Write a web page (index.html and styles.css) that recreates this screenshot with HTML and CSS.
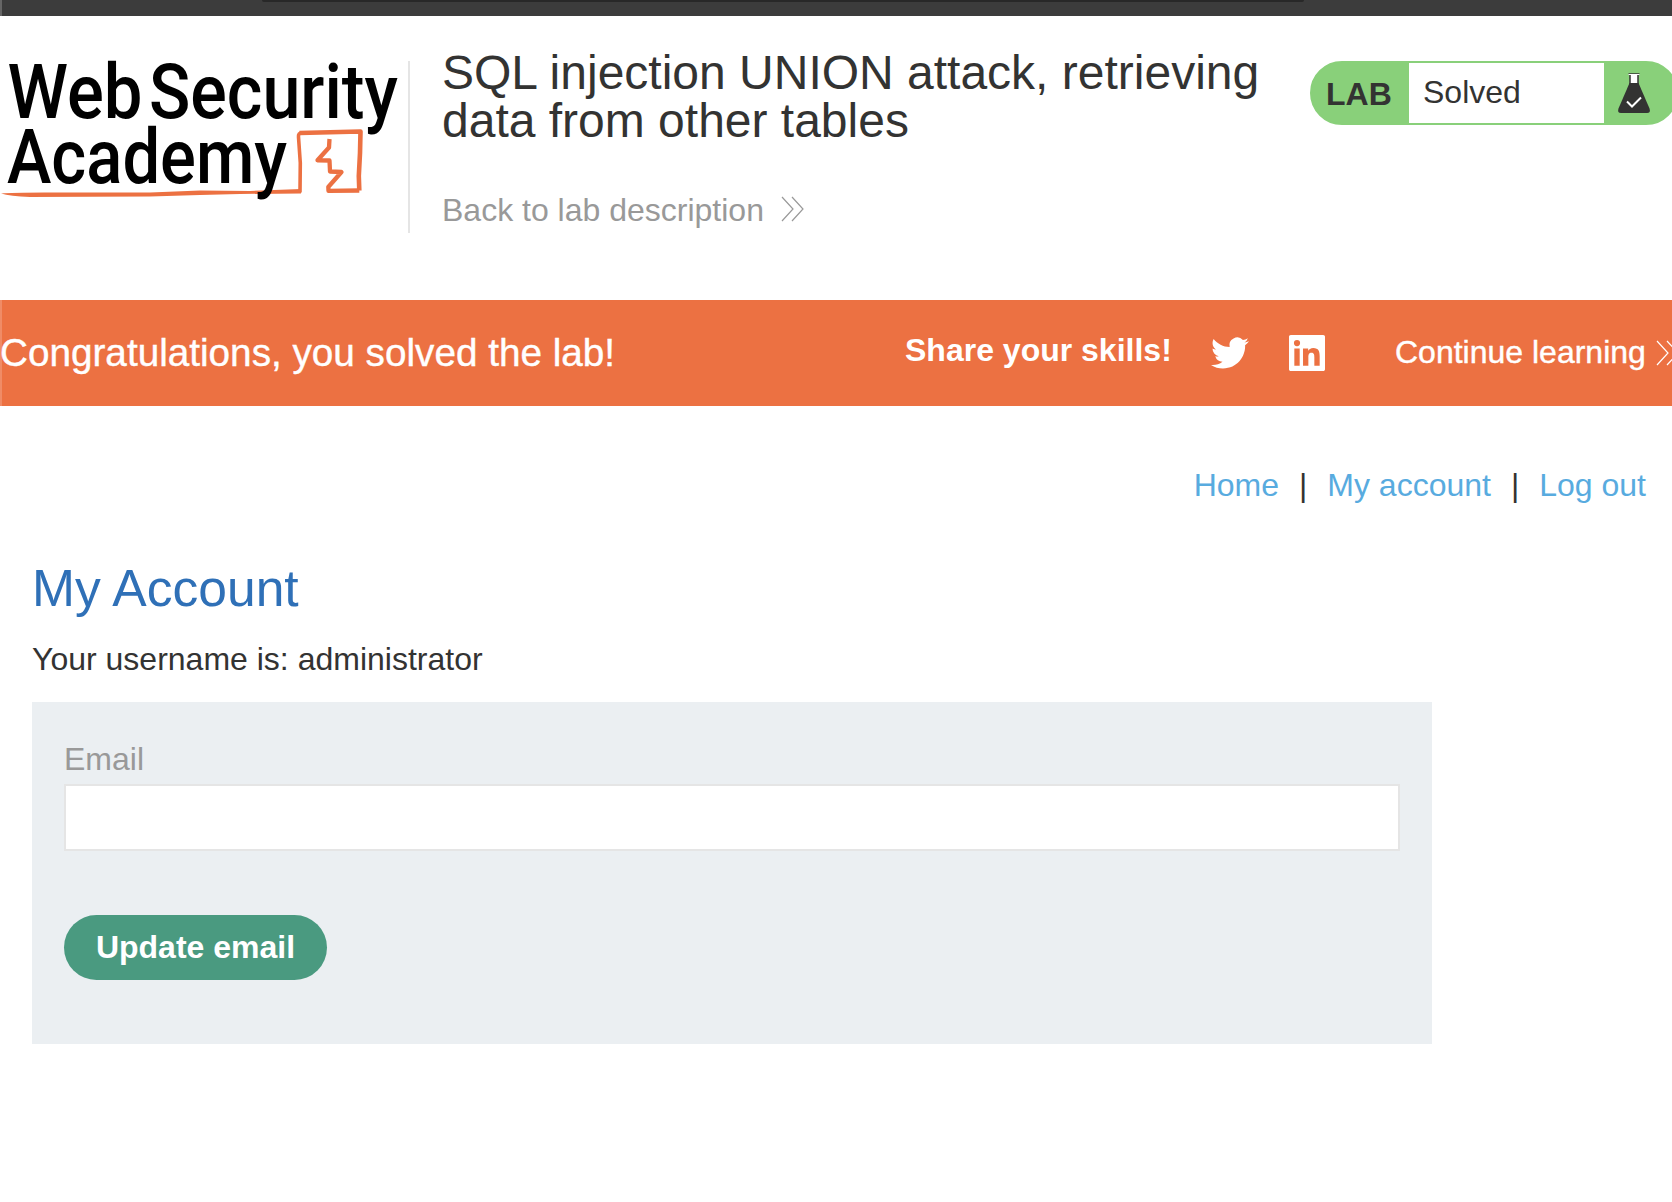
FILE: index.html
```html
<!DOCTYPE html>
<html lang="en">
<head>
<meta charset="utf-8">
<title>SQL injection UNION attack, retrieving data from other tables</title>
<link rel="stylesheet" href="styles.css">
</head>
<body>
<div class="browser-bar"><div class="address-bar"></div></div>
<header class="lab-header">
  <svg class="logo" width="408" height="170" viewBox="0 -16 408 170" role="img" aria-label="Web Security Academy">
    <g fill="none" stroke="#ec7142" stroke-linejoin="round">
      <path d="M300 134.500 L300.300 105 L298.500 79 Q298 75 302 74.800" stroke-width="3.600"/>
      <path d="M299.500 75 L360.500 73.500 L360 95 L358.800 118 L359.300 132.500" stroke-width="4.600"/>
      <path d="M359.300 132.500 L328.500 132.800 L328.300 129 L341.500 114 L330 113.500 L329.500 102.500 L317.500 102.300 L329 89.500 L329.500 81" stroke-width="4.300"/>
    </g>
    <path d="M1 135.500 Q14 134.200 60 134.500 L150 134.500 L200 132.500 L250 133 L301 131 L301 135.500 L240 136 L200 137 L150 138.500 L30 139 Q10 138 1 135.500Z" fill="#ec7142"/>
    <g class="logo-text">
      <text x="7.500" y="60.300" textLength="135" lengthAdjust="spacingAndGlyphs">Web</text>
      <text x="149" y="60.300" textLength="249" lengthAdjust="spacingAndGlyphs">Security</text>
      <text x="7" y="125.300" textLength="280" lengthAdjust="spacingAndGlyphs">Academy</text>
    </g>
  </svg>
  <div class="title-block">
    <h2 class="lab-title">SQL injection UNION attack, retrieving data from other tables</h2>
    <a class="back-link">Back to lab description
      <svg class="chevrons" width="24" height="26" viewBox="0 0 24 26"><path d="M1 1 L12 13 L1 25 M11 1 L22 13 L11 25"/></svg>
    </a>
  </div>
  <div class="lab-status">
    <span class="lab-label">LAB</span>
    <span class="lab-state">Solved</span>
    <svg class="flask" width="34" height="42" viewBox="0 0 34 42">
      <path d="M11.500 2 H22.500 M13 2 V12 H21 V2" fill="#fff" stroke="#333332" stroke-width="1.500"/>
      <path d="M11.500 2.500 H22.500" stroke="#fff" stroke-width="1"/>
      <path d="M12.500 11 H21.500 L32.500 36.500 Q34 41 30 41 H4 Q0 41 1.500 36.500Z" fill="#333332"/>
      <path d="M10 29.500 L15 34.500 L24 25.500" fill="none" stroke="#fff" stroke-width="2"/>
    </svg>
  </div>
</header>
<section class="banner">
  <p class="congrats">Congratulations, you solved the lab!</p>
  <span class="share">Share your skills!</span>
  <svg class="twitter" width="38" height="38" viewBox="0 0 24 24"><path fill="#fff" d="M23.953 4.570a10 10 0 01-2.825.775 4.958 4.958 0 002.163-2.723c-.951.555-2.005.959-3.127 1.184a4.920 4.920 0 00-8.384 4.482C7.690 8.095 4.067 6.130 1.640 3.162a4.822 4.822 0 00-.666 2.475c0 1.710.870 3.213 2.188 4.096a4.904 4.904 0 01-2.228-.616v.060a4.923 4.923 0 003.946 4.827 4.996 4.996 0 01-2.212.085 4.936 4.936 0 004.604 3.417 9.867 9.867 0 01-6.102 2.105c-.390 0-.779-.023-1.170-.067a13.995 13.995 0 007.557 2.209c9.053 0 13.998-7.496 13.998-13.985 0-.210 0-.420-.015-.630A9.935 9.935 0 0024 4.590z"/></svg>
  <svg class="linkedin" width="36" height="36" viewBox="0 0 24 24"><path fill="#fff" d="M20.447 20.452h-3.554v-5.569c0-1.328-.027-3.037-1.852-3.037-1.853 0-2.136 1.445-2.136 2.939v5.667H9.351V9h3.414v1.561h.046c.477-.900 1.637-1.850 3.370-1.850 3.601 0 4.267 2.370 4.267 5.455v6.286zM5.337 7.433a2.062 2.062 0 01-2.063-2.065 2.064 2.064 0 112.063 2.065zm1.782 13.019H3.555V9h3.564v11.452zM22.800 0H1.200C.500 0 0 .500 0 1.200v21.600C0 23.500.500 24 1.200 24h21.600c.700 0 1.200-.500 1.200-1.200V1.200C24 .500 23.500 0 22.800 0z"/></svg>
  <a class="continue">Continue learning</a>
  <svg class="chevrons chevrons-light" width="24" height="26" viewBox="0 0 24 26"><path d="M1 1 L12 13 L1 25 M11 1 L22 13 L11 25"/></svg>
</section>
<main class="content">
  <nav class="top-links"><a>Home</a><span>|</span><a>My account</a><span>|</span><a>Log out</a></nav>
  <h1 class="page-title">My Account</h1>
  <p class="username">Your username is: administrator</p>
  <form class="email-form">
    <label class="email-label" for="email">Email</label>
    <input class="email-input" id="email" type="email">
    <button class="update-button" type="button">Update email</button>
  </form>
</main>
</body>
</html>
```
FILE: styles.css
```css
* { box-sizing: border-box; }

body {
  margin: 0;
  min-height: 1202px;
  overflow: hidden;
  background: #fff;
  color: #333332;
  font: 32px/32px "Liberation Sans", Arial, sans-serif;
}

h1, h2, p { margin: 0; font-weight: 400; }

.browser-bar {
  height: 16px;
  padding-left: 260px;
  background: #3c3c3c;
  border-left: 2px solid #666;
}

.address-bar {
  width: 1042px;
  height: 2px;
  background: #282828;
  border-radius: 0 0 8px 8px;
}

.lab-header {
  display: flex;
  align-items: flex-start;
  height: 284px;
}

.logo { flex: none; margin-top: 26px; }

.logo-text {
  font-family: Roboto, sans-serif;
  font-size: 76px;
  font-weight: 500;
  fill: #000;
}

.title-block {
  flex: none;
  width: 902px;
  height: 172px;
  margin-top: 45px;
  padding-left: 32px;
  border-left: 2px solid #e5e5e5;
}

.lab-title {
  width: 840px;
  margin-top: -12px;
  font-size: 48px;
  line-height: 48px;
}

.back-link {
  display: flex;
  gap: 17px;
  margin-top: 49px;
  color: #999;
}

.chevrons {
  flex: none;
  margin-top: 2px;
  fill: none;
  stroke: #999;
  stroke-width: 1.2;
}

.lab-status {
  display: flex;
  flex: none;
  width: 368px;
  height: 64px;
  margin-top: 45px;
  background: #89d07a;
  border: 2px solid #89d07a;
  border-radius: 32px;
}

.lab-label {
  width: 97px;
  padding: 15px 0 0 14px;
  font-weight: 700;
}

.lab-state {
  width: 195px;
  padding: 13px 0 0 14px;
  background: #fff;
}

.flask { margin: 9px 0 0 13px; }

.banner {
  display: flex;
  align-items: flex-start;
  height: 106px;
  background: #ec7142;
  border-left: 2px solid #f08b66;
  color: #fff;
}

.congrats {
  flex: none;
  width: 905px;
  margin: 33px 0 0 -2px;
  font-size: 38.7px;
  line-height: 40px;
  white-space: nowrap;
  -webkit-text-stroke: 0.4px #fff;
}

.share { flex: none; width: 306px; margin-top: 34px; font-weight: 700; }

.twitter { flex: none; margin-top: 34px; }

.linkedin { flex: none; margin: 35px 0 0 40px; }

.continue {
  flex: none;
  width: 261px;
  margin: 36px 0 0 70px;
  -webkit-text-stroke: 0.4px #fff;
}

.chevrons-light { margin-top: 40px; stroke: #fff; }

.content { padding: 0 32px; }

.top-links {
  display: flex;
  justify-content: flex-end;
  gap: 20px;
  padding-top: 63px;
  margin-right: -6px;
  color: #58abdf;
}

.top-links span { color: #333332; }

.page-title {
  margin-top: 61px;
  color: #2f70b7;
  font-size: 51.6px;
  line-height: 52px;
}

.username { margin-top: 29px; }

.email-form {
  display: flex;
  flex-direction: column;
  align-items: flex-start;
  width: 1400px;
  height: 342px;
  margin-top: 27px;
  padding: 41px 32px 0;
  background: #ebeff2;
}

.email-label { color: #999; }

.email-input {
  width: 1336px;
  height: 67px;
  margin-top: 9px;
  padding: 0 16px;
  border: 2px solid #e5e5e5;
  border-radius: 0;
  background: #fff;
  font: inherit;
}

.update-button {
  width: 263px;
  height: 65px;
  margin-top: 64px;
  padding: 0 0 2px;
  border: 0;
  border-radius: 33px;
  background: #4a9a80;
  color: #fff;
  font: inherit;
  font-weight: 700;
}
```
